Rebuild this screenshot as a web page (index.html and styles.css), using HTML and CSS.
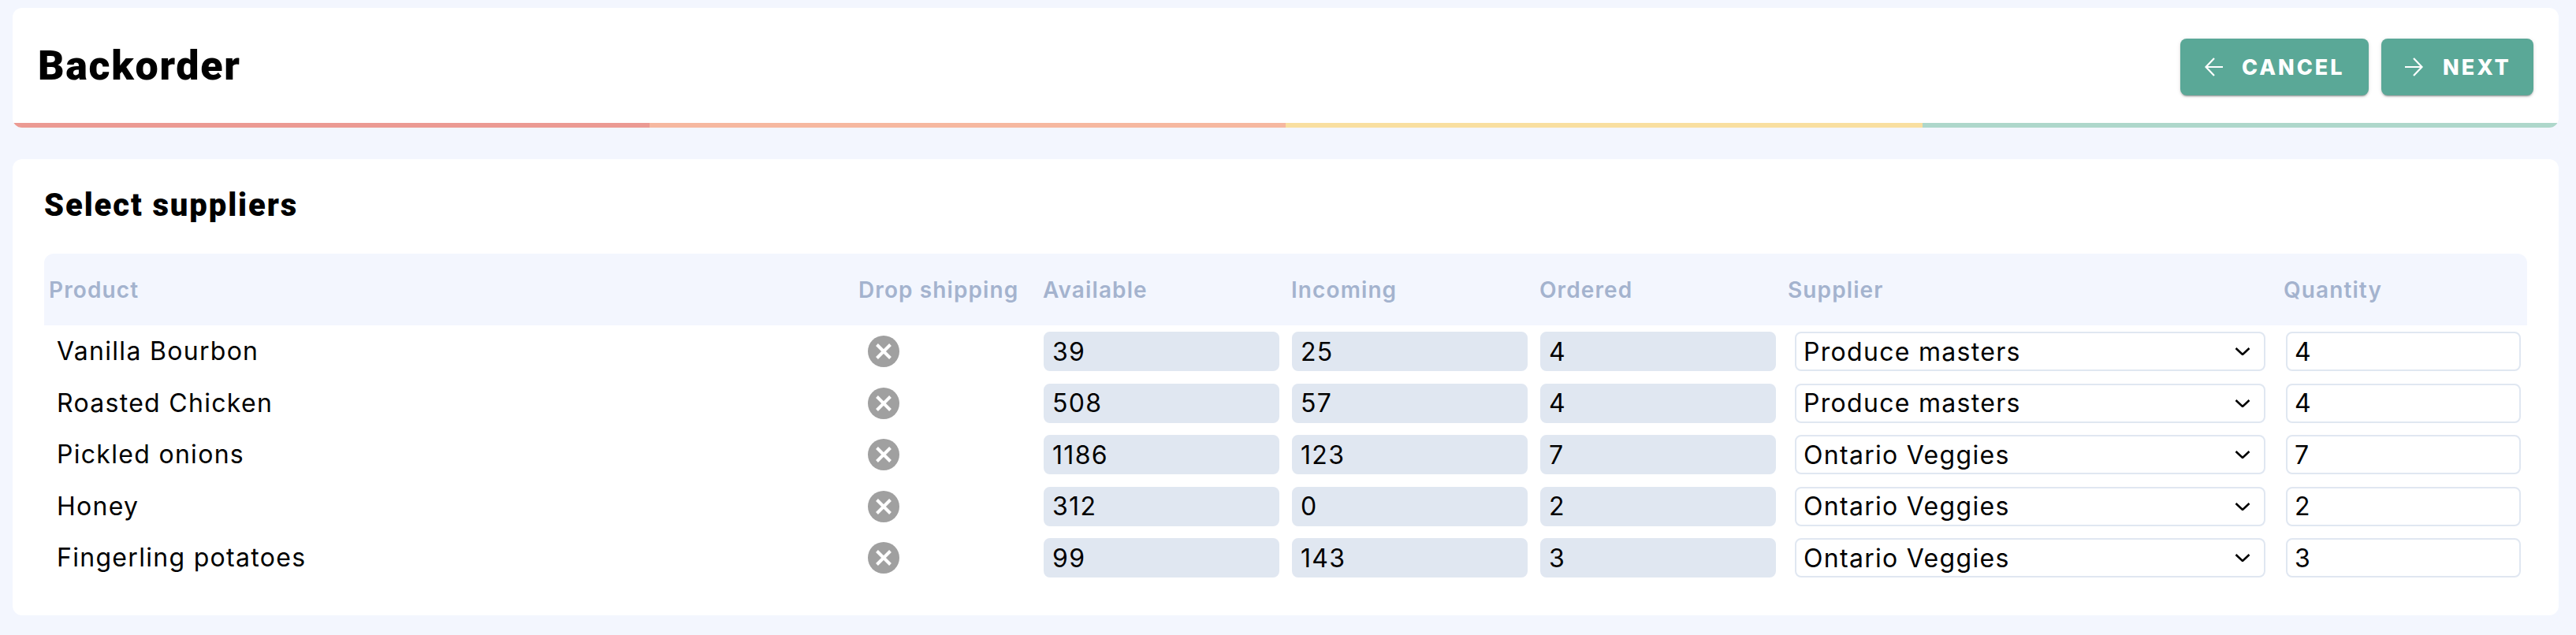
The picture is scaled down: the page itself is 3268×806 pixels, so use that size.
FILE: index.html
```html
<!DOCTYPE html>
<html lang="en">
<head>
<meta charset="utf-8">
<title>Backorder</title>
<link rel="stylesheet" href="styles.css">
</head>
<body>
<main class="page">
  <header class="card head">
    <div class="head-main">
      <h1 class="title">Backorder</h1>
      <div class="actions">
        <button class="btn btn-cancel" type="button">
          <svg class="arrow" viewBox="0 0 24 24"><path d="M23 12H1.5M12 1L1.5 12 12 23"/></svg>
          <span>Cancel</span>
        </button>
        <button class="btn btn-next" type="button">
          <svg class="arrow" viewBox="0 0 24 24"><path d="M1 12h21.5M12 1l10.5 11L12 23"/></svg>
          <span>Next</span>
        </button>
      </div>
    </div>
    <div class="steps"><i class="s1"></i><i class="s2"></i><i class="s3"></i><i class="s4"></i></div>
  </header>

  <section class="card body">
    <h2 class="subtitle">Select suppliers</h2>
    <div class="thead cols">
      <div class="th th-product">Product</div>
      <div class="th th-drop">Drop shipping</div>
      <div class="th">Available</div>
      <div class="th">Incoming</div>
      <div class="th">Ordered</div>
      <div class="th th-supplier">Supplier</div>
      <div class="th">Quantity</div>
    </div>

    <div class="tr cols">
      <div class="name">Vanilla Bourbon</div>
      <div class="drop"><svg class="x" viewBox="0 0 40 40"><circle cx="20" cy="20" r="20"/><path d="M11.5 11.5l17 17M28.5 11.5l-17 17"/></svg></div>
      <div class="td"><input class="ro" value="39" readonly></div>
      <div class="td"><input class="ro" value="25" readonly></div>
      <div class="td"><input class="ro" value="4" readonly></div>
      <div class="sel"><select><option>Produce masters</option><option>Ontario Veggies</option></select><svg class="chev" viewBox="0 0 20 10"><path d="M1.5 1l8.5 8 8.5-8"/></svg></div>
      <div class="qty"><input value="4"></div>
    </div>
    <div class="tr cols">
      <div class="name">Roasted Chicken</div>
      <div class="drop"><svg class="x" viewBox="0 0 40 40"><circle cx="20" cy="20" r="20"/><path d="M11.5 11.5l17 17M28.5 11.5l-17 17"/></svg></div>
      <div class="td"><input class="ro" value="508" readonly></div>
      <div class="td"><input class="ro" value="57" readonly></div>
      <div class="td"><input class="ro" value="4" readonly></div>
      <div class="sel"><select><option>Produce masters</option><option>Ontario Veggies</option></select><svg class="chev" viewBox="0 0 20 10"><path d="M1.5 1l8.5 8 8.5-8"/></svg></div>
      <div class="qty"><input value="4"></div>
    </div>
    <div class="tr cols">
      <div class="name">Pickled onions</div>
      <div class="drop"><svg class="x" viewBox="0 0 40 40"><circle cx="20" cy="20" r="20"/><path d="M11.5 11.5l17 17M28.5 11.5l-17 17"/></svg></div>
      <div class="td"><input class="ro" value="1186" readonly></div>
      <div class="td"><input class="ro" value="123" readonly></div>
      <div class="td"><input class="ro" value="7" readonly></div>
      <div class="sel"><select><option>Ontario Veggies</option><option>Produce masters</option></select><svg class="chev" viewBox="0 0 20 10"><path d="M1.5 1l8.5 8 8.5-8"/></svg></div>
      <div class="qty"><input value="7"></div>
    </div>
    <div class="tr cols">
      <div class="name">Honey</div>
      <div class="drop"><svg class="x" viewBox="0 0 40 40"><circle cx="20" cy="20" r="20"/><path d="M11.5 11.5l17 17M28.5 11.5l-17 17"/></svg></div>
      <div class="td"><input class="ro" value="312" readonly></div>
      <div class="td"><input class="ro" value="0" readonly></div>
      <div class="td"><input class="ro" value="2" readonly></div>
      <div class="sel"><select><option>Ontario Veggies</option><option>Produce masters</option></select><svg class="chev" viewBox="0 0 20 10"><path d="M1.5 1l8.5 8 8.5-8"/></svg></div>
      <div class="qty"><input value="2"></div>
    </div>
    <div class="tr cols">
      <div class="name">Fingerling potatoes</div>
      <div class="drop"><svg class="x" viewBox="0 0 40 40"><circle cx="20" cy="20" r="20"/><path d="M11.5 11.5l17 17M28.5 11.5l-17 17"/></svg></div>
      <div class="td"><input class="ro" value="99" readonly></div>
      <div class="td"><input class="ro" value="143" readonly></div>
      <div class="td"><input class="ro" value="3" readonly></div>
      <div class="sel"><select><option>Ontario Veggies</option><option>Produce masters</option></select><svg class="chev" viewBox="0 0 20 10"><path d="M1.5 1l8.5 8 8.5-8"/></svg></div>
      <div class="qty"><input value="3"></div>
    </div>
  </section>
</main>
</body>
</html>
```
FILE: styles.css
```css
* { box-sizing: border-box; }
html, body { margin: 0; height: 100%; }
body {
  background: #f3f6fe;
  color: #000;
  font-family: "Inter", "Liberation Sans", sans-serif;
  font-size: 32px;
  letter-spacing: 1.3px;
  overflow: hidden;
}
.page {
  display: flex;
  flex-direction: column;
  gap: 40px;
  padding: 10px 22px 0 16px;
}
.card {
  background: #fff;
  border-radius: 12px;
  overflow: hidden;
}
.head-main {
  display: flex;
  align-items: center;
  justify-content: space-between;
  height: 146px;
  padding: 0 32px 0 32px;
}
.title {
  margin: 2px 0 0;
  font-family: "Roboto", sans-serif;
  font-weight: 900;
  font-size: 52px;
  letter-spacing: 1.7px;
  line-height: 60px;
}
.actions { display: flex; gap: 16px; margin-top: 4px; }
.btn {
  display: flex;
  align-items: center;
  height: 72px;
  border: 0;
  border-radius: 8px;
  background: #5aa897;
  color: #fff;
  font-family: "Inter", sans-serif;
  font-weight: 800;
  font-size: 27px;
  letter-spacing: 3px;
  text-transform: uppercase;
  box-shadow: 0 3px 1px -2px rgba(0,0,0,.2), 0 2px 2px rgba(0,0,0,.14), 0 1px 5px rgba(0,0,0,.12);
}
.btn-cancel { width: 239px; padding: 0 0 0 31px; gap: 23px; }
.btn-next { width: 193px; padding: 0 0 0 29px; gap: 25px; }
.arrow {
  width: 24px;
  height: 24px;
  fill: none;
  stroke: #fff;
  stroke-width: 2.2;
  flex: none;
}
.steps { display: flex; height: 6px; }
.steps i { flex: 1; }
.s1 { background: #eb9a93; }
.s2 { background: #f6b8a0; }
.s3 { background: #f9dfa0; }
.s4 { background: #aed7cb; }

.body { height: 579px; padding: 30px 40px 0; }
.subtitle {
  margin: 0 0 32px;
  font-family: "Roboto", sans-serif;
  font-weight: 900;
  font-size: 40px;
  letter-spacing: 1.9px;
  line-height: 58px;
}
.cols {
  display: grid;
  grid-template-columns: 1026px 234px 315px 315px 315px 629px 316px;
}
.thead {
  height: 91px;
  align-items: center;
  background: #f3f6fe;
  border-radius: 12px 12px 0 0;
  margin-bottom: 8px;
}
.th {
  padding-left: 7px;
  font-weight: 600;
  font-size: 28px;
  letter-spacing: 1.1px;
  color: #a4b3ce;
  white-space: nowrap;
}
.th-product { padding-left: 6px; }
.tr { height: 65.5px; align-items: start; }
.name { padding-left: 16px; line-height: 50px; white-space: nowrap; }
.drop { padding: 5px 0 0 19px; line-height: 0; }
.x { width: 40px; height: 40px; }
.x circle { fill: #a0a0a0; }
.x path { fill: none; stroke: #fff; stroke-width: 4; }
input, select {
  display: block;
  width: 100%;
  height: 50px;
  margin: 0;
  padding: 0 9px;
  font: inherit;
  letter-spacing: inherit;
  color: #000;
  border: 2px solid #e0e7f1;
  border-radius: 8px;
  background: #fff;
  outline: 0;
}
.td { padding: 0 8px; }
.ro { background: #e0e7f1; }
.sel { position: relative; padding: 0 16px; }
.sel select { appearance: none; -webkit-appearance: none; }
.chev {
  position: absolute;
  top: 20px;
  right: 35px;
  width: 20px;
  height: 10px;
  fill: none;
  stroke: #000;
  stroke-width: 2.6;
  pointer-events: none;
}
.qty { padding: 0 8px 0 10px; }
```
